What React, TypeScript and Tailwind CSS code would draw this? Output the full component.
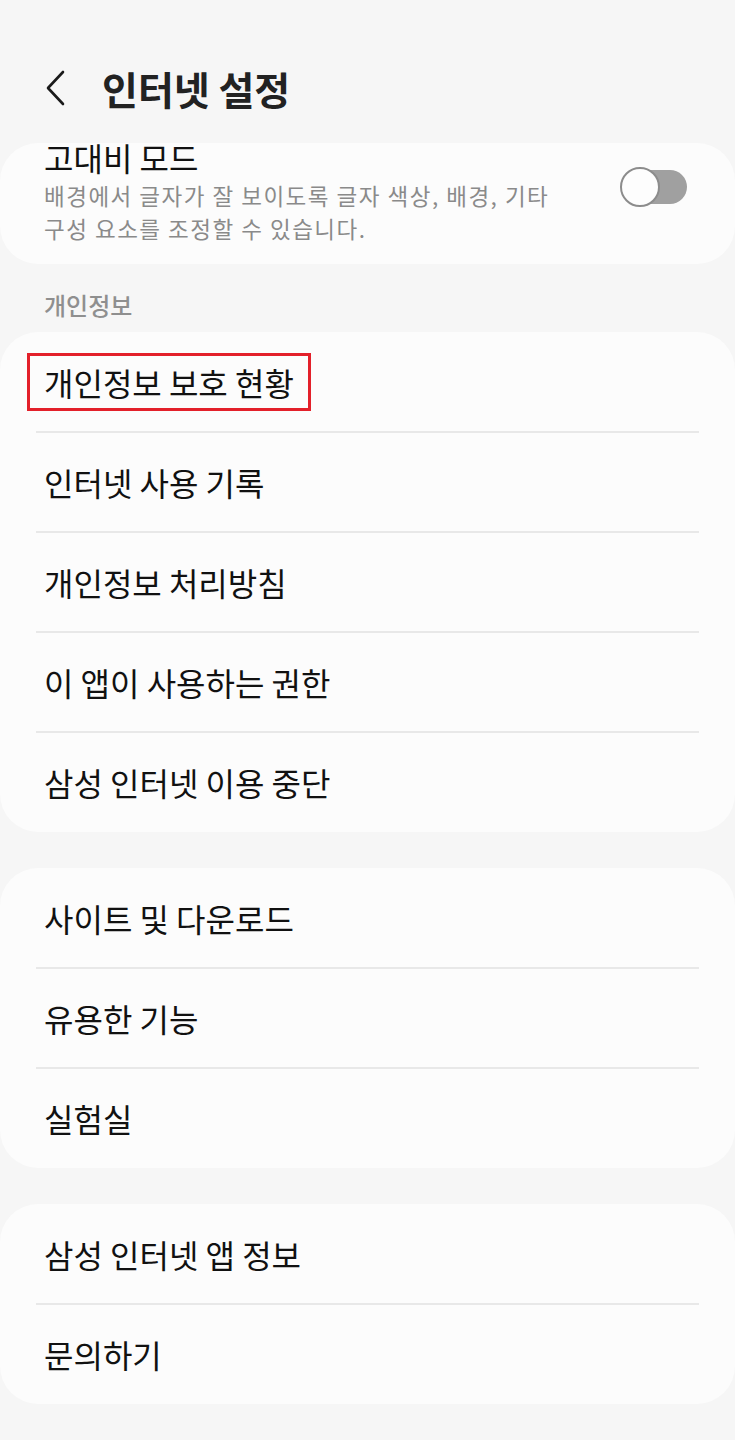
import React from 'react'

const font = { fontFamily: '"Noto Sans CJK KR", "Noto Sans", sans-serif' }

function Divider() {
  return <div className="mx-[36px] h-[2px] bg-[#e8e8e8]" />
}

function Row({ label, highlight }: { label: string; highlight?: boolean }) {
  return (
    <div className="flex h-[98px] items-center px-[44px]">
      {highlight ? (
        <span className="-mx-[17px] border-[3px] border-[#e3202a] px-[14px] py-[8px] text-[32px] leading-[36px] text-[#111]">
          {label}
        </span>
      ) : (
        <span className="text-[32px] leading-[36px] text-[#111]">{label}</span>
      )}
    </div>
  )
}

function Card({ items, highlightFirst }: { items: string[]; highlightFirst?: boolean }) {
  return (
    <div className="rounded-[38px] bg-[#fcfcfc] py-[1px]">
      {items.map((item, i) => (
        <React.Fragment key={item}>
          {i > 0 && <Divider />}
          <Row label={item} highlight={highlightFirst && i === 0} />
        </React.Fragment>
      ))}
    </div>
  )
}

export default function App() {
  return (
    <div className="min-h-[1440px] w-[735px] bg-[#f6f6f6] pb-[36px]" style={font}>
      {/* Header */}
      <div className="h-[143px] pt-[60px]">
        <div className="flex h-[56px] items-center">
          <svg
            className="ml-[44px] h-[36px] w-[24px]"
            viewBox="0 0 24 36"
            fill="none"
            stroke="#1a1a1a"
            strokeWidth="2.6"
            strokeLinecap="round"
            strokeLinejoin="round"
          >
            <path d="M19 2 L4 18 L19 34" />
          </svg>
          <h1 className="ml-[34px] text-[39px] font-bold leading-[46px] text-[#222]">인터넷 설정</h1>
        </div>
      </div>

      {/* High contrast card (list is scrolled, title sits on the card's top edge) */}
      <div className="flex h-[121px] items-start justify-between rounded-[38px] bg-[#fcfcfc] pl-[44px] pr-[48px]">
        <div className="-mt-[4px]">
          <div className="text-[32px] leading-[36px] text-[#111]">고대비 모드</div>
          <div className="mt-[4px] text-[22.5px] leading-[33px] tracking-[1.5px] text-[#8a8a8a]">
            <div>배경에서 글자가 잘 보이도록 글자 색상, 배경, 기타</div>
            <div>구성 요소를 조정할 수 있습니다.</div>
          </div>
        </div>
        <div className="relative mt-[24px] h-[40px] w-[67px] shrink-0">
          <div className="absolute left-[2px] top-[3px] h-[34px] w-[65px] rounded-full bg-[#a0a0a0]" />
          <div className="absolute left-0 top-0 h-[40px] w-[40px] rounded-full border-[2px] border-[#8c8c8c] bg-[#fdfdfd]" />
        </div>
      </div>

      {/* Section label */}
      <div className="mb-[14px] mt-[28px] px-[44px] text-[24px] font-medium leading-[26px] text-[#8f8f8f]">
        개인정보
      </div>

      <Card
        highlightFirst
        items={[
          '개인정보 보호 현황',
          '인터넷 사용 기록',
          '개인정보 처리방침',
          '이 앱이 사용하는 권한',
          '삼성 인터넷 이용 중단',
        ]}
      />

      <div className="mt-[36px]">
        <Card items={['사이트 및 다운로드', '유용한 기능', '실험실']} />
      </div>

      <div className="mt-[36px]">
        <Card items={['삼성 인터넷 앱 정보', '문의하기']} />
      </div>
    </div>
  )
}
